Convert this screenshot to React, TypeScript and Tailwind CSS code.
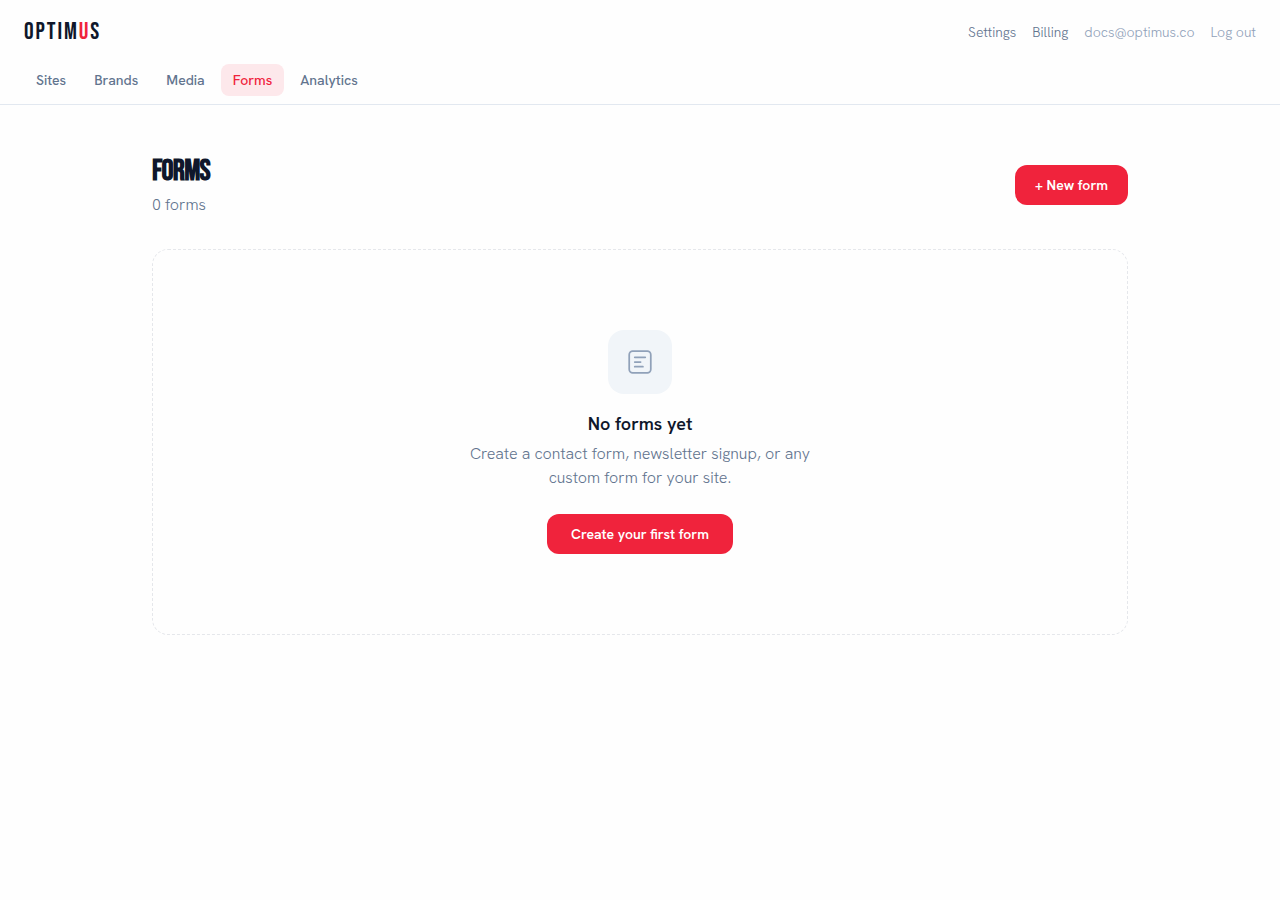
const navItems = [
  { label: "Sites", active: false },
  { label: "Brands", active: false },
  { label: "Media", active: false },
  { label: "Forms", active: true },
  { label: "Analytics", active: false },
];

function FormIcon() {
  return (
    <svg
      className="size-7"
      viewBox="0 0 24 24"
      fill="none"
      stroke="currentColor"
      strokeWidth="1.5"
      strokeLinecap="round"
      strokeLinejoin="round"
      aria-hidden="true"
    >
      <rect x="2.75" y="2.75" width="18.5" height="18.5" rx="3" />
      <path d="M7.5 8h9M7.5 12h5M7.5 16h7" />
    </svg>
  );
}

function Header() {
  return (
    <header className="border-b border-slate-200">
      <div className="flex h-16 items-center justify-between px-6">
        <a
          href="#"
          className="font-['Bebas_Neue','Roboto_Condensed','Liberation_Sans_Narrow',sans-serif] text-2xl tracking-[0.08em] text-slate-900"
        >
          OPTIM<span className="text-[#f0233c]">U</span>S
        </a>
        <div className="flex items-center gap-4 text-sm">
          <a href="#" className="text-slate-500">Settings</a>
          <a href="#" className="text-slate-500">Billing</a>
          <span className="text-slate-400">docs@optimus.co</span>
          <button type="button" className="text-slate-400">Log out</button>
        </div>
      </div>
      <nav className="flex gap-1 px-6 pb-2">
        {navItems.map((item) => (
          <a
            key={item.label}
            href="#"
            aria-current={item.active ? "page" : undefined}
            className={
              item.active
                ? "rounded-lg bg-[#fde8eb] px-3 py-1.5 text-sm font-medium text-[#f0233c]"
                : "rounded-lg px-3 py-1.5 text-sm font-medium text-slate-500"
            }
          >
            {item.label}
          </a>
        ))}
      </nav>
    </header>
  );
}

export default function App() {
  return (
    <div className="min-h-screen bg-[#fefefe] font-['Hanken_Grotesk','Inter',sans-serif] font-light text-slate-900 antialiased">
      <Header />
      <main className="mx-auto max-w-5xl px-6 py-12">
        <div className="mb-8 flex items-center justify-between">
          <div>
            <h1 className="font-['Bebas_Neue','Roboto_Condensed','Liberation_Sans_Narrow',sans-serif] text-3xl font-bold tracking-tight">
              FORMS
            </h1>
            <p className="mt-1 text-slate-500">0 forms</p>
          </div>
          <button
            type="button"
            className="rounded-xl bg-[#f0233c] px-5 py-2.5 text-sm font-semibold text-white"
          >
            + New form
          </button>
        </div>
        <section className="flex flex-col items-center rounded-2xl border border-dashed border-gray-200 px-6 py-20 text-center">
          <div className="mb-4 flex size-16 items-center justify-center rounded-2xl bg-slate-100 text-slate-400">
            <FormIcon />
          </div>
          <h2 className="text-lg font-semibold">No forms yet</h2>
          <p className="mt-1 max-w-96 text-slate-500">
            Create a contact form, newsletter signup, or any custom form for your site.
          </p>
          <button
            type="button"
            className="mt-6 rounded-xl bg-[#f0233c] px-6 py-2.5 text-sm font-semibold text-white"
          >
            Create your first form
          </button>
        </section>
      </main>
    </div>
  );
}
